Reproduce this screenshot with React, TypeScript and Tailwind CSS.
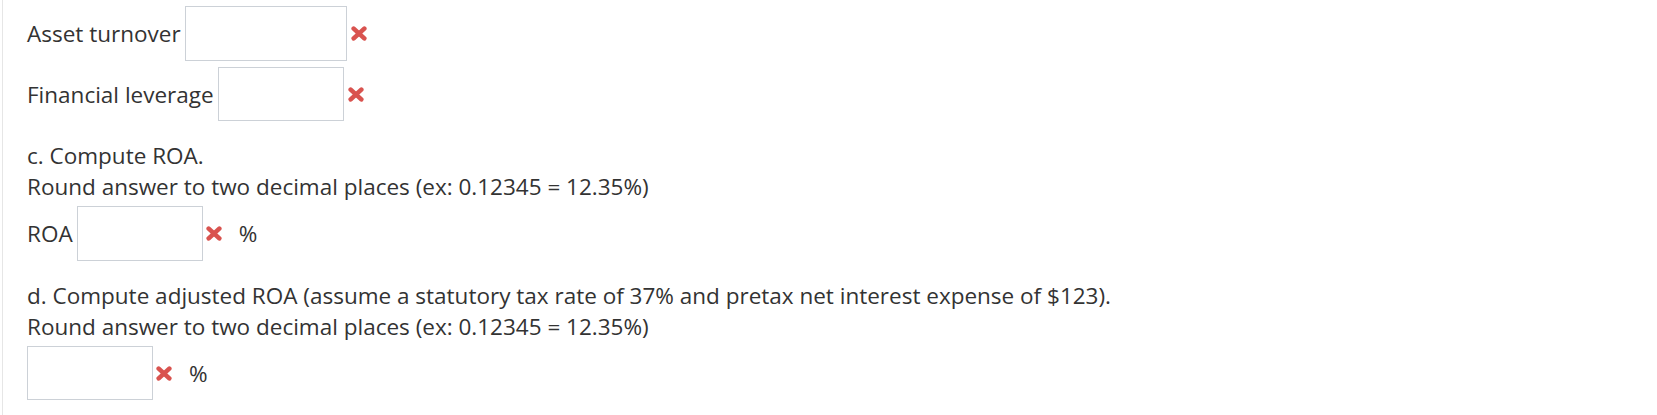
import React from "react";

function XIcon() {
  return (
    <svg width="16" height="15" viewBox="0 0 16 15" className="shrink-0">
      <line x1="2.7" y1="2.6" x2="13.3" y2="12.4" stroke="#d9534f" strokeWidth="4.6" strokeLinecap="round" />
      <line x1="13.3" y1="2.6" x2="2.7" y2="12.4" stroke="#d9534f" strokeWidth="4.6" strokeLinecap="round" />
    </svg>
  );
}

function Box({ w, h }: { w: string; h: string }) {
  return <div className={`${w} ${h} border border-[#ccd1d7] bg-white shrink-0`} />;
}

export default function App() {
  return (
    <div
      className="w-[1657px] h-[415px] bg-white pl-[2px] text-[22.5px] leading-[31px] text-[#333333]"
      style={{ fontFamily: '"Open Sans", "Noto Sans", sans-serif' }}
    >
      <div className="h-full border-l border-[#e6e6e6] pl-[24px] flex flex-col">
        <div className="mt-[6px] h-[55px] flex items-center">
          <span>Asset turnover</span>
          <div className="ml-[4px]">
            <Box w="w-[162px]" h="h-[55px]" />
          </div>
          <div className="ml-[4px]">
            <XIcon />
          </div>
        </div>
        <div className="mt-[6px] h-[54px] flex items-center">
          <span>Financial leverage</span>
          <div className="ml-[4px]">
            <Box w="w-[126px]" h="h-[54px]" />
          </div>
          <div className="ml-[4px]">
            <XIcon />
          </div>
        </div>
        <div className="mt-[19px]">
          <p>c. Compute ROA.</p>
          <p>Round answer to two decimal places (ex: 0.12345 = 12.35%)</p>
        </div>
        <div className="mt-[4px] h-[55px] flex items-center">
          <span>ROA</span>
          <div className="ml-[4px]">
            <Box w="w-[126px]" h="h-[55px]" />
          </div>
          <div className="ml-[3px]">
            <XIcon />
          </div>
          <span className="ml-[17px]">%</span>
        </div>
        <div className="mt-[19px]">
          <p>d. Compute adjusted ROA (assume a statutory tax rate of 37% and pretax net interest expense of $123).</p>
          <p>Round answer to two decimal places (ex: 0.12345 = 12.35%)</p>
        </div>
        <div className="mt-[4px] h-[54px] flex items-center">
          <Box w="w-[126px]" h="h-[54px]" />
          <div className="ml-[3px]">
            <XIcon />
          </div>
          <span className="ml-[17px]">%</span>
        </div>
      </div>
    </div>
  );
}
